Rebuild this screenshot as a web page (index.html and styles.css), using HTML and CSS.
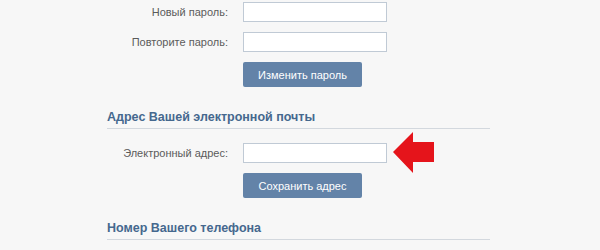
FILE: index.html
```html
<html>
<head>
   <link rel="stylesheet" href="styles.css">
</head>
<body>
   <div id="settings">
      <div class="form-block">
         <div class="form-row">
            <label class="form-label">Новый пароль:</label>
            <input type="password" class="form-input">
         </div>
         <div class="form-row">
            <label class="form-label">Повторите пароль:</label>
            <input type="password" class="form-input">
         </div>
         <div class="form-row">
            <span class="form-label"></span>
            <button class="blue-button">Изменить пароль</button>
         </div>
      </div>

      <h4 class="section-title">Адрес Вашей электронной почты</h4>
      <div class="form-block">
         <div class="form-row">
            <label class="form-label">Электронный адрес:</label>
            <div class="input-wrap">
               <input type="text" class="form-input">
               <svg class="hint-arrow" width="42" height="42" viewBox="0 0 42 42">
                  <polygon points="0,20 20,0 20,10 41,10 41,30 20,30 20,41" fill="#e5141b"/>
               </svg>
            </div>
         </div>
         <div class="form-row">
            <span class="form-label"></span>
            <button class="blue-button">Сохранить адрес</button>
         </div>
      </div>

      <h4 class="section-title">Номер Вашего телефона</h4>
   </div>
</body>
</html>
```
FILE: styles.css
```css
body {
   margin: 0;
   background-color: #f7f7f7;
   font-family: "Liberation Sans", Arial, sans-serif;
   font-size: 11px;
   color: #5b5b5b;
}

#settings {
   width: 383px;
   margin-left: 107px;
   padding-top: 2px;
}

.form-block {
   display: flex;
   flex-direction: column;
   gap: 10px;
}

.form-row {
   display: grid;
   grid-template-columns: 121px auto;
   column-gap: 15px;
   align-items: center;
   justify-items: start;
}

.form-label {
   justify-self: end;
   text-align: right;
}

.form-input {
   box-sizing: border-box;
   width: 144px;
   height: 20px;
   margin: 0;
   border: 1px solid #c0cad5;
   background-color: #fff;
   padding: 2px 3px;
}

.input-wrap {
   position: relative;
}

.hint-arrow {
   position: absolute;
   left: 150px;
   top: -11px;
}

.blue-button {
   width: 119px;
   height: 25px;
   padding: 0;
   border: none;
   border-radius: 2px;
   background-color: #6383a8;
   color: #fff;
   font-family: inherit;
   font-size: 11px;
   cursor: pointer;
}

.section-title {
   margin: 22px 0 14px 0;
   padding-bottom: 3px;
   border-bottom: 1px solid #d3d8de;
   font-size: 12.5px;
   line-height: 16px;
   font-weight: bold;
   color: #45688e;
}
```
